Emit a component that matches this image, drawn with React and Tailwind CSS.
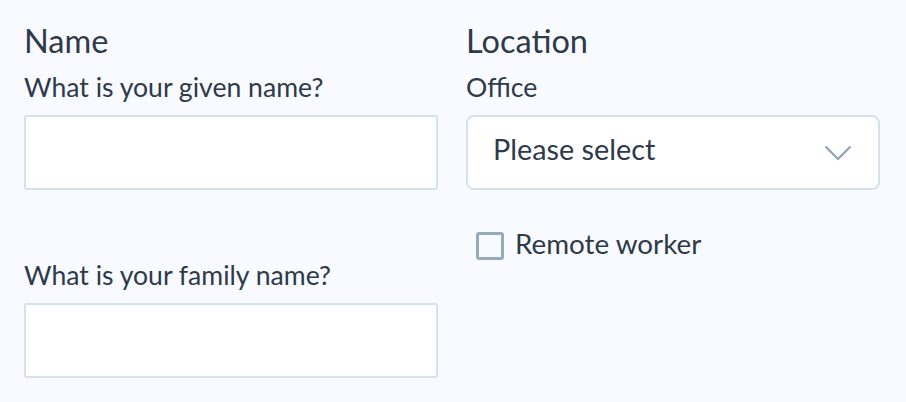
function TextField({ label, className = '' }) {
  return (
    <div className={className}>
      <label className="block text-[26.6px] leading-[36px]">{label}</label>
      <input
        type="text"
        className="block mt-[10px] w-full h-[75px] bg-white border-2 border-[#d5e1eb] rounded-[3px] outline-none"
      />
    </div>
  );
}

export default function App() {
  return (
    <div
      className="min-h-screen bg-[#f8faff] text-[#2e3a49] pl-[24px] pr-[26px] pt-[21px]"
      style={{ fontFamily: 'Lato, "Noto Sans", sans-serif' }}
    >
      <div className="grid grid-cols-2 gap-x-[28px]">
        {/* Name */}
        <div>
          <h2 className="text-[32.5px] leading-[40px] font-normal">Name</h2>
          <TextField label="What is your given name?" className="mt-[8px]" />
          <TextField label="What is your family name?" className="mt-[67px]" />
        </div>

        {/* Location */}
        <div>
          <h2 className="text-[32.5px] leading-[40px] font-normal">Location</h2>
          <label className="block text-[26.6px] leading-[36px] mt-[8px]">Office</label>
          <button
            type="button"
            className="mt-[10px] w-full h-[75px] bg-white border-2 border-[#d5e1eb] rounded-[8px] flex items-center justify-between pl-[25px] pr-[26px] pb-[8px]"
          >
            <span className="text-[28.8px] leading-[36px]">Please select</span>
            <svg width="28" height="16" viewBox="0 0 28 16" fill="none" className="mt-[8px]">
              <polyline points="1.5,1.5 14,14 26.5,1.5" stroke="#8fa3b4" strokeWidth="2.2" />
            </svg>
          </button>
          <label className="mt-[36px] flex items-start gap-[11px] pl-[10px]">
            <span className="mt-[6px] w-[28px] h-[28px] border-[3px] border-[#98aaba] rounded-[3px] bg-[#f8faff] shrink-0" />
            <span className="text-[27.8px] leading-[36px]">Remote worker</span>
          </label>
        </div>
      </div>
    </div>
  );
}
